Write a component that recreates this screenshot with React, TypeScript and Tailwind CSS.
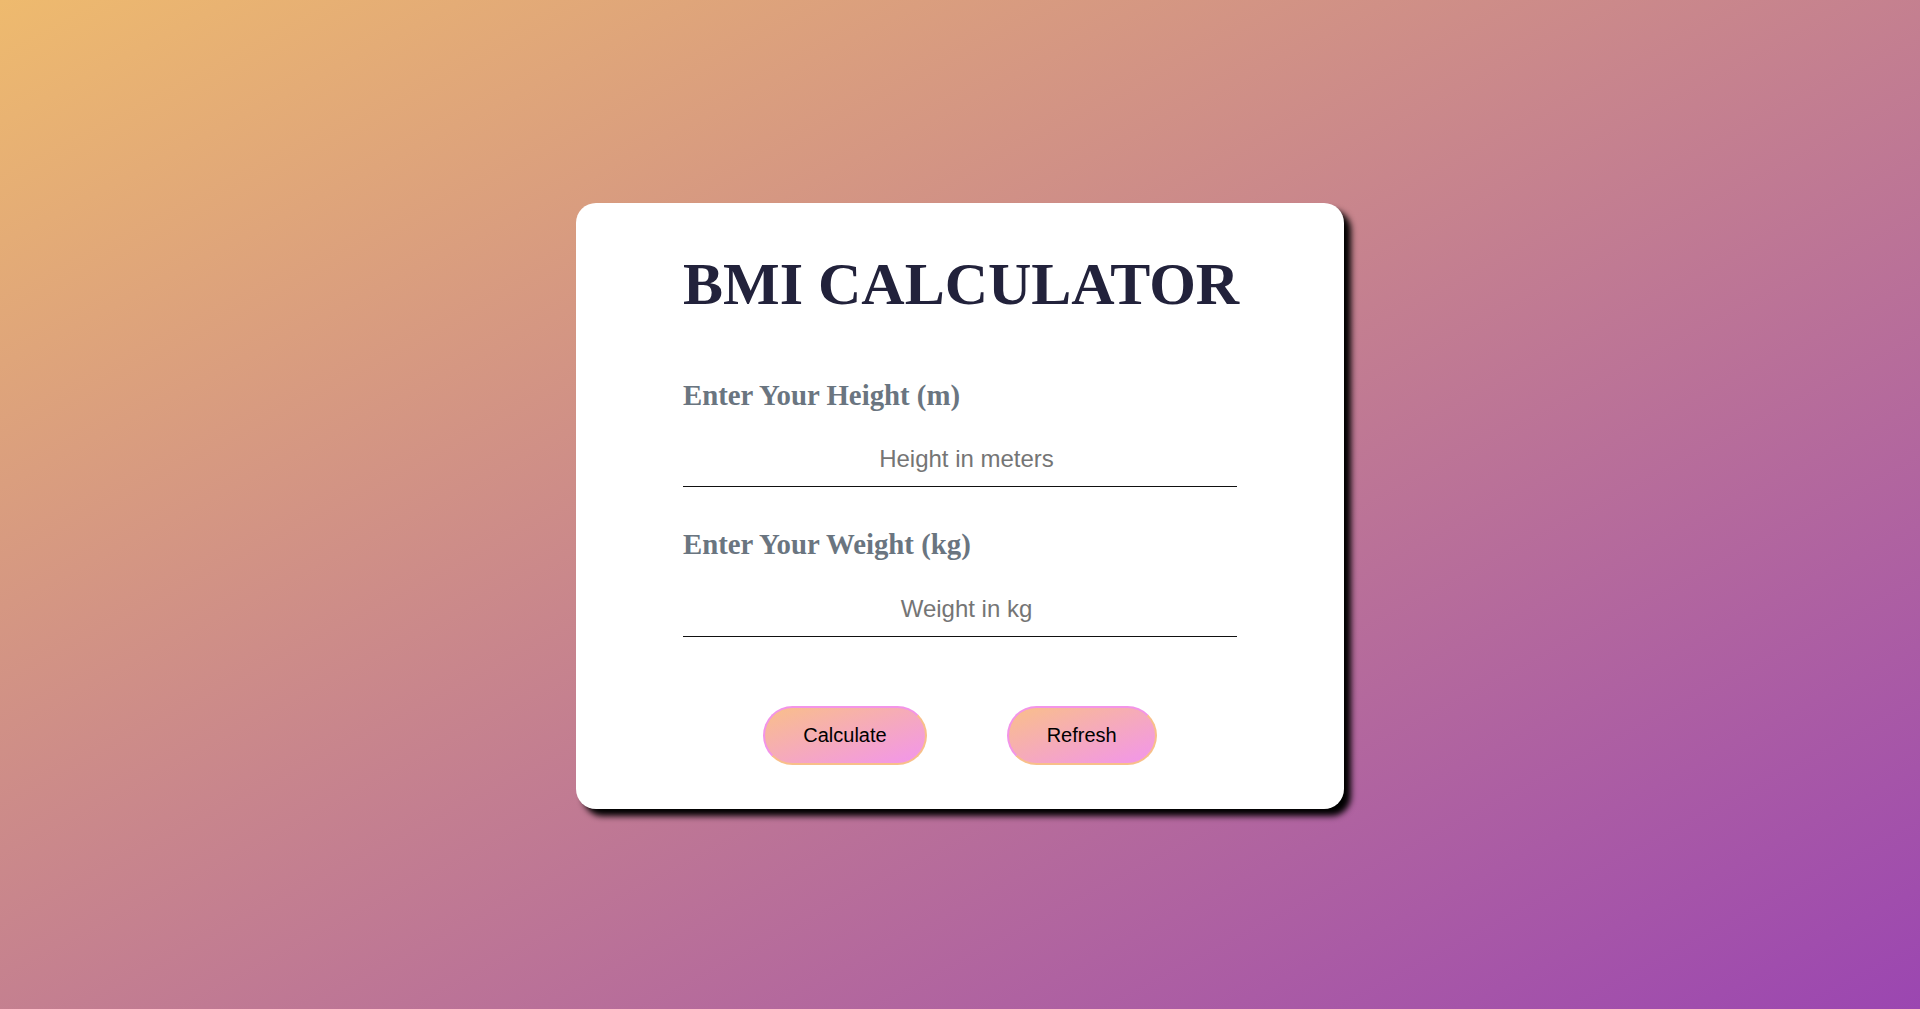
import React from "react";

export default function App() {
  return (
    <div className="w-full h-[1009px] flex items-center justify-center bg-[linear-gradient(to_bottom_right,#eeba6e,#9b46b1)]">
      <div className="w-[768px] h-[606px] mt-[2px] bg-white rounded-[20px] shadow-[7px_7px_6px_#000] pt-[47px] flex flex-col">
        <div className="w-[554px] mx-auto flex flex-col">
          <h1 className="whitespace-nowrap font-['Liberation_Serif','Times_New_Roman',serif] font-bold text-[60px] leading-[69px] text-[#22223b] text-center">
            BMI CALCULATOR
          </h1>
          <label className="mt-[60px] font-['Liberation_Serif','Times_New_Roman',serif] font-bold text-[28.8px] leading-[32px] text-[#6a7580]">
            Enter Your Height (m)
          </label>
          <input
            type="text"
            placeholder="Height in meters"
            className="mt-[22px] w-full pt-3 pb-[13px] pl-[13px] border-b border-[#111] outline-none text-center font-['Liberation_Sans',Arial,sans-serif] text-[24px] leading-[28px] placeholder:text-[#757575] bg-transparent"
          />
          <label className="mt-[41px] font-['Liberation_Serif','Times_New_Roman',serif] font-bold text-[28.8px] leading-[32px] text-[#6a7580]">
            Enter Your Weight (kg)
          </label>
          <input
            type="text"
            placeholder="Weight in kg"
            className="mt-[23px] w-full pt-3 pb-[13px] pl-[13px] border-b border-[#111] outline-none text-center font-['Liberation_Sans',Arial,sans-serif] text-[24px] leading-[28px] placeholder:text-[#757575] bg-transparent"
          />
          <div className="mt-[69px] flex justify-center gap-[80px]">
            <button className="h-[59px] px-[38px] rounded-full border-2 border-t-[#f294e8] border-l-[#f294e8] border-b-[#f8bf8a] border-r-[#f8bf8a] bg-[linear-gradient(to_bottom_right,#f9bf8a,#f295ec)] text-black font-['Liberation_Sans',Arial,sans-serif] text-[20px]">
              Calculate
            </button>
            <button className="h-[59px] px-[38px] rounded-full border-2 border-t-[#f294e8] border-l-[#f294e8] border-b-[#f8bf8a] border-r-[#f8bf8a] bg-[linear-gradient(to_bottom_right,#f9bf8a,#f295ec)] text-black font-['Liberation_Sans',Arial,sans-serif] text-[20px]">
              Refresh
            </button>
          </div>
        </div>
      </div>
    </div>
  );
}
